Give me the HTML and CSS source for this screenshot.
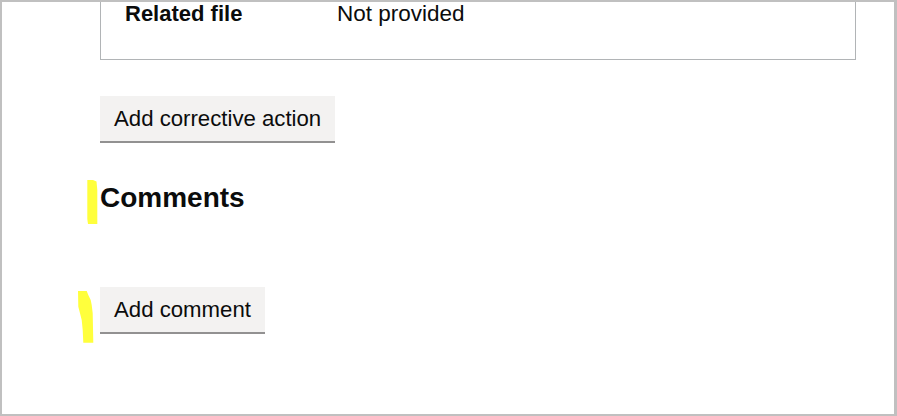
FILE: index.html
```html
<!DOCTYPE html>
<html lang="en">
<head>
<meta charset="utf-8">
<title>Corrective actions and comments</title>
<link rel="stylesheet" href="styles.css">
</head>
<body>
<div class="frame">
  <div class="content">
    <dl class="card">
      <div class="row">
        <dt class="key">Related file</dt>
        <dd class="value">Not provided</dd>
      </div>
    </dl>
    <button class="button button-action" type="button">Add corrective action</button>
    <h2 class="heading">Comments</h2>
    <button class="button button-comment" type="button">Add comment</button>
  </div>
</div>
<svg class="marks" width="897" height="416" viewBox="0 0 897 416" aria-hidden="true">
  <polygon fill="#ffff3c" points="87.3,180 93,180 96.5,181.5 97.3,190 97.3,224 88,224 87.3,219"/>
  <polygon fill="#ffff3c" points="78,291 86.7,291 88.3,295 90.7,300 91.7,305 92.7,313.3 93.3,342.7 83.3,342.7 82.7,330 81.7,320 80,313.3 78.3,306.7"/>
</svg>
</body>
</html>
```
FILE: styles.css
```css
html, body {
  margin: 0;
  padding: 0;
  background: #ffffff;
}

body {
  position: relative;
  width: 897px;
  height: 416px;
  font-family: "Liberation Sans", Arial, sans-serif;
  color: #0b0c0c;
}

.frame {
  box-sizing: border-box;
  width: 897px;
  height: 416px;
  border: 2px solid #c0c0c0;
  border-right-width: 3px;
  overflow: hidden;
}

.content {
  display: flex;
  flex-direction: column;
  align-items: flex-start;
  padding: 0 38px 0 98px;
}

.card {
  align-self: stretch;
  margin: -12px 0 0 0;
  border: 1px solid #b1b4b6;
  padding: 10px 0 32px 24px;
}

.row {
  display: grid;
  grid-template-columns: 212px 1fr;
}

.key,
.value {
  margin: 0;
  font-size: 22.5px;
  line-height: 26px;
}

.key {
  font-weight: 700;
  font-size: 22px;
}

.button {
  font-family: "Liberation Sans", Arial, sans-serif;
  font-size: 22.2px;
  line-height: 26px;
  color: #0b0c0c;
  background: #f3f2f1;
  border: 0;
  border-radius: 0;
  box-shadow: 0 2px 0 #929191;
  padding: 10px 14px 9px 14px;
  margin: 0;
  cursor: pointer;
}

.button-action {
  margin-top: 36px;
}

.heading {
  margin: 41px 0 0 0;
  font-size: 28px;
  line-height: 32px;
  font-weight: 700;
}

.button-comment {
  margin-top: 73px;
}

.marks {
  position: absolute;
  top: 0;
  left: 0;
  pointer-events: none;
}
```
